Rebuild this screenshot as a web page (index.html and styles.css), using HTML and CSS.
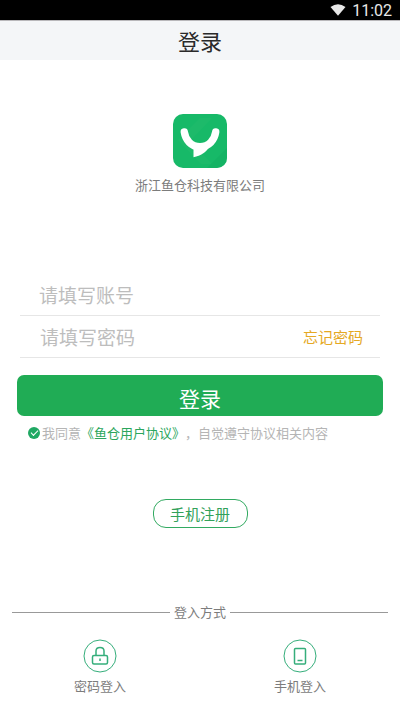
FILE: index.html
```html
<!DOCTYPE html>
<html lang="zh-CN">
<head>
<meta charset="utf-8">
<meta name="viewport" content="width=device-width, initial-scale=1">
<title>登录</title>
<link rel="stylesheet" href="styles.css">
</head>
<body>
<div class="status">
  <svg class="wifi" viewBox="0 0 16 12" aria-hidden="true"><path d="M0.5 3Q8-2.4 15.500 3L8 11.800Z"/></svg>
  <span>11:02</span>
</div>
<header class="header"><h1>登录</h1></header>
<main>
  <section class="brand">
    <svg class="logo" viewBox="0 0 54 54" aria-hidden="true">
      <rect width="54" height="54" rx="10" fill="#17b968"/>
      <path d="M5 26 27 4h12L17 27l22 23H28Z" fill="#23bb6c" opacity=".5"/>
      <path d="M34 54 54 34v10a10 10 0 0 1-10 10Z" fill="#12ad5f" opacity=".5"/>
      <path d="M11.300 18C12.500 26 18 32.800 27 32.800S41.500 26 42.700 18" fill="none" stroke="#fff" stroke-width="7.400" stroke-linecap="round"/>
      <path d="M20.500 33v10.200C28 41.500 33 38.500 36 33Z" fill="#fff"/>
    </svg>
    <p>浙江鱼仓科技有限公司</p>
  </section>
  <form class="form">
    <div class="field">
      <input type="text" placeholder="请填写账号" aria-label="账号">
    </div>
    <div class="field">
      <input type="password" placeholder="请填写密码" aria-label="密码">
      <a class="forgot" href="#">忘记密码</a>
    </div>
    <button class="submit" type="button">登录</button>
    <div class="agree">
      <input type="checkbox" id="agree" checked>
      <label for="agree">我同意<a href="#">《鱼仓用户协议》</a>，自觉遵守协议相关内容</label>
    </div>
    <button class="register" type="button">手机注册</button>
  </form>
  <section class="methods">
    <h2>登入方式</h2>
    <div class="options">
      <button type="button">
        <svg viewBox="0 0 34 34" aria-hidden="true"><circle cx="17" cy="17" r="16"/><g class="glyph"><rect x="9.500" y="16.500" width="15" height="8.500" rx="1.500"/><path d="M13 16v-4q0-3.500 4-3.500t4 3.500v4M17 19.500v2.500"/></g></svg>
        <span>密码登入</span>
      </button>
      <button type="button">
        <svg viewBox="0 0 34 34" aria-hidden="true"><circle cx="17" cy="17" r="16"/><g class="glyph"><rect x="11.500" y="9.500" width="11" height="15.500" rx="1"/><path d="M14.500 21.500h5"/></g></svg>
        <span>手机登入</span>
      </button>
    </div>
  </section>
</main>
</body>
</html>
```
FILE: styles.css
```css
* {
  box-sizing: border-box;
}

body {
  margin: 0;
  min-height: 100vh;
  display: flex;
  flex-direction: column;
  background: #fff;
  color: #7c7c7c;
  font: 13px/20px "Noto Sans CJK SC", sans-serif;
}

h1, h2, p {
  margin: 0;
  font-weight: 400;
}

button, input {
  font-family: inherit;
}

button {
  padding: 0;
  border: 0;
  background: none;
}

a {
  text-decoration: none;
}

.status {
  display: flex;
  justify-content: flex-end;
  align-items: center;
  gap: 6px;
  height: 20px;
  padding: 2px 8px 0 0;
  background: #000;
  color: #e8e8e8;
  font: 16px/18px Roboto, sans-serif;
}

.wifi {
  width: 16px;
  height: 12px;
  margin-bottom: 2px;
  fill: #e8e8e8;
}

.header {
  height: 40px;
  border-top: 1px solid #b9b8bb;
  background: #f4f6f8;
  text-align: center;
}

.header h1 {
  color: #2a2a2a;
  font-size: 22px;
  line-height: 38px;
}

main {
  flex: 1;
  display: flex;
  flex-direction: column;
}

.brand {
  display: flex;
  flex-direction: column;
  align-items: center;
  gap: 7px;
  padding-top: 54px;
}

.logo {
  width: 54px;
  height: 54px;
}

.form {
  display: flex;
  flex-direction: column;
  padding: 79px 17px 0;
}

.field {
  display: flex;
  align-items: center;
  height: 42px;
  margin: 0 3px;
  padding: 0 17px 0 19px;
  border-bottom: 1px solid #e6e6e6;
}

.field + .field {
  padding-left: 20px;
}

.field input {
  flex: 1;
  min-width: 0;
  height: 40px;
  padding: 0;
  border: 0;
  outline: 0;
  background: none;
  color: #333;
  font-size: 19px;
}

.field input::placeholder {
  color: #bdbdbd;
  opacity: 1;
}

.forgot {
  color: #e5a823;
  font-size: 15px;
}

.submit {
  height: 41px;
  margin-top: 17px;
  padding-top: 4px;
  border-radius: 7px;
  background: #20ac55;
  color: #fff;
  font-size: 21px;
  line-height: 30px;
}

.agree {
  display: flex;
  align-items: center;
  gap: 2px;
  margin-top: 7px;
  padding-left: 11px;
  color: #b5b5b5;
  text-spacing-trim: space-all;
  white-space: nowrap;
}

.agree a {
  color: #2ba65d;
}

.agree input {
  appearance: none;
  width: 12px;
  height: 12px;
  margin: 0;
  border-radius: 50%;
  background: #20a863;
  display: grid;
  place-items: center;
}

.agree input:checked::before {
  content: "";
  width: 6px;
  height: 3px;
  margin-bottom: 2px;
  border: solid #fff;
  border-width: 0 0 1px 1px;
  transform: rotate(-45deg);
}

.register {
  align-self: center;
  width: 95px;
  height: 29px;
  margin-top: 56px;
  border: 1px solid #32aa61;
  border-radius: 13px;
  color: #32a15a;
  font-size: 15px;
  line-height: 26px;
}

.methods {
  margin-top: auto;
  padding: 0 12px 16px;
}

.methods h2 {
  display: flex;
  align-items: center;
  gap: 4px;
  font-size: 13px;
}

.methods h2::before,
.methods h2::after {
  content: "";
  flex: 1;
  height: 1px;
  background: #999;
}

.options {
  display: grid;
  grid-template-columns: 1fr 1fr;
  margin: 17px -12px 0;
}

.options button {
  display: flex;
  flex-direction: column;
  align-items: center;
  gap: 3px;
  color: #7c7c7c;
  font-size: 13px;
  line-height: 20px;
}

.options svg {
  width: 34px;
  height: 34px;
  fill: none;
  stroke: #35ae7b;
  stroke-width: 1;
}

.options .glyph {
  stroke-width: 1.5;
}
```
